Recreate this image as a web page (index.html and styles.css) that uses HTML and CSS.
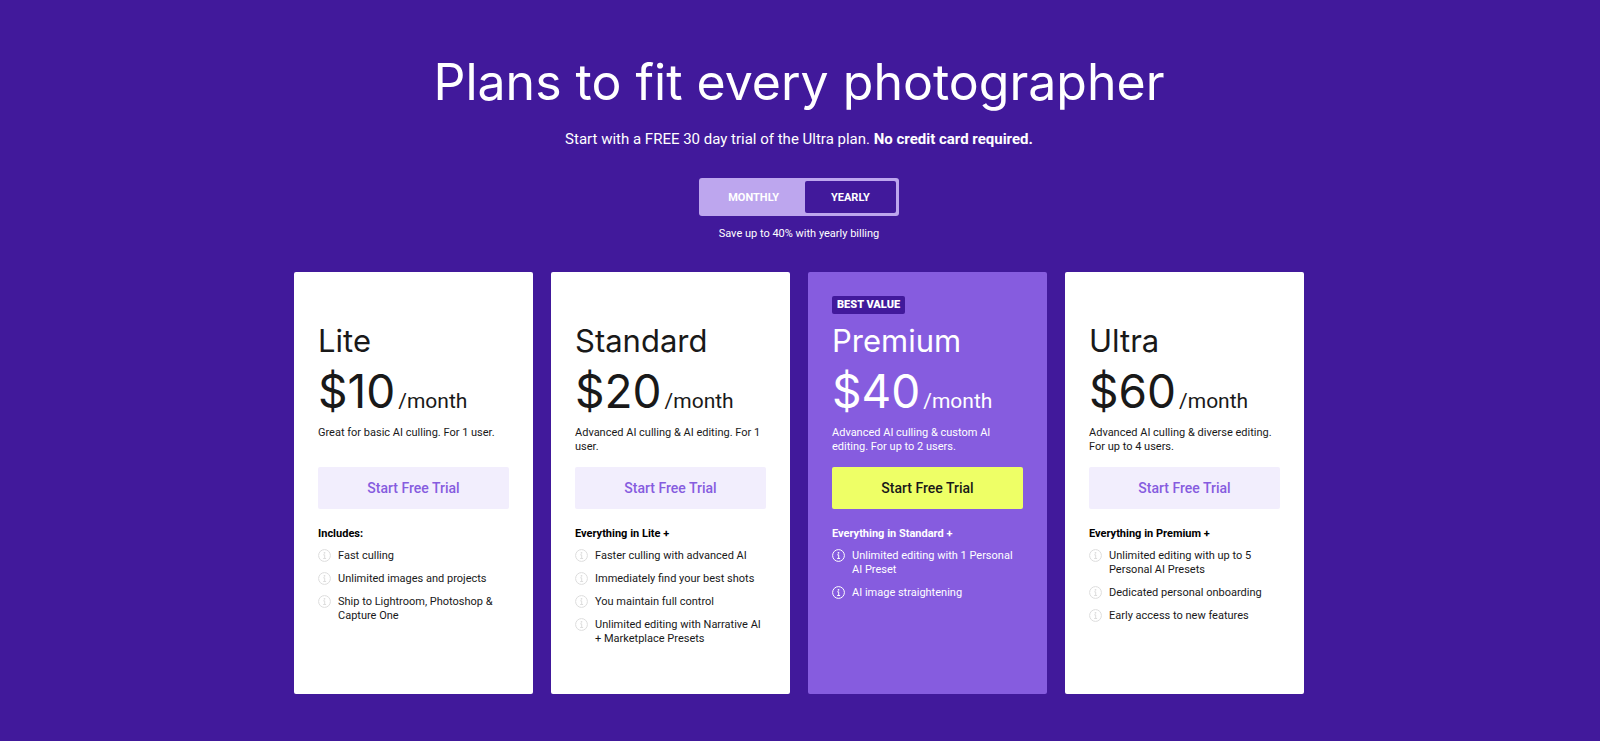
FILE: index.html
```html
<!DOCTYPE html>
<html lang="en">
<head>
    <meta charset="UTF-8">
    <meta name="viewport" content="width=device-width, initial-scale=1.0">
    <title>Plans to fit every photographer</title>
    <link rel="stylesheet" href="styles.css">
</head>
<body>
    <svg class="sprite" aria-hidden="true">
        <symbol id="info" viewBox="0 0 13 13">
            <circle cx="6.5" cy="6.5" r="5.9" fill="none" stroke="currentColor"/>
            <circle cx="6.5" cy="3.8" r="0.9" fill="currentColor"/>
            <path d="M5.2 5.8H6.7V9.5M5.2 9.5H8.1" fill="none" stroke="currentColor"/>
        </symbol>
    </svg>

    <header class="header">
        <h1>Plans to fit every photographer</h1>
        <p class="intro">Start with a FREE 30 day trial of the Ultra plan. <strong>No credit card required.</strong></p>
        <div class="billing">
            <button type="button" class="billing-btn">MONTHLY</button>
            <button type="button" class="billing-btn active">YEARLY</button>
        </div>
        <p class="save">Save up to 40% with yearly billing</p>
    </header>

    <main class="plans">
        <section class="plan">
            <div class="badge-row"></div>
            <h2>Lite</h2>
            <p class="price">$10<span class="per">/month</span></p>
            <p class="description">Great for basic AI culling. For 1 user.</p>
            <button type="button" class="trial-btn">Start Free Trial</button>
            <h3>Includes:</h3>
            <ul class="features">
                <li><svg class="icon"><use href="#info"/></svg><span>Fast culling</span></li>
                <li><svg class="icon"><use href="#info"/></svg><span>Unlimited images and projects</span></li>
                <li><svg class="icon"><use href="#info"/></svg><span>Ship to Lightroom, Photoshop &amp; Capture One</span></li>
            </ul>
        </section>

        <section class="plan">
            <div class="badge-row"></div>
            <h2>Standard</h2>
            <p class="price">$20<span class="per">/month</span></p>
            <p class="description">Advanced AI culling &amp; AI editing. For 1 user.</p>
            <button type="button" class="trial-btn">Start Free Trial</button>
            <h3>Everything in Lite +</h3>
            <ul class="features">
                <li><svg class="icon"><use href="#info"/></svg><span>Faster culling with advanced AI</span></li>
                <li><svg class="icon"><use href="#info"/></svg><span>Immediately find your best shots</span></li>
                <li><svg class="icon"><use href="#info"/></svg><span>You maintain full control</span></li>
                <li><svg class="icon"><use href="#info"/></svg><span>Unlimited editing with Narrative AI + Marketplace Presets</span></li>
            </ul>
        </section>

        <section class="plan premium">
            <div class="badge-row"><span class="badge">BEST VALUE</span></div>
            <h2>Premium</h2>
            <p class="price">$40<span class="per">/month</span></p>
            <p class="description">Advanced AI culling &amp; custom AI editing. For up to 2 users.</p>
            <button type="button" class="trial-btn">Start Free Trial</button>
            <h3>Everything in Standard +</h3>
            <ul class="features">
                <li><svg class="icon"><use href="#info"/></svg><span>Unlimited editing with 1 Personal AI Preset</span></li>
                <li><svg class="icon"><use href="#info"/></svg><span>AI image straightening</span></li>
            </ul>
        </section>

        <section class="plan">
            <div class="badge-row"></div>
            <h2>Ultra</h2>
            <p class="price">$60<span class="per">/month</span></p>
            <p class="description">Advanced AI culling &amp; diverse editing. For up to 4 users.</p>
            <button type="button" class="trial-btn">Start Free Trial</button>
            <h3>Everything in Premium +</h3>
            <ul class="features">
                <li><svg class="icon"><use href="#info"/></svg><span>Unlimited editing with up to 5 Personal AI Presets</span></li>
                <li><svg class="icon"><use href="#info"/></svg><span>Dedicated personal onboarding</span></li>
                <li><svg class="icon"><use href="#info"/></svg><span>Early access to new features</span></li>
            </ul>
        </section>
    </main>
</body>
</html>
```
FILE: styles.css
```css
* {
    box-sizing: border-box;
}
body {
    margin: 0;
    padding: 52px 26px 47px 24px;
    background: #41199b;
    color: white;
    font-family: Roboto, Arial, sans-serif;
    font-size: 11px;
    line-height: 14px;
}
h1, h2, h3, p, ul {
    margin: 0;
    padding: 0;
}
button {
    border: none;
    font-family: inherit;
    cursor: pointer;
}
.sprite {
    display: none;
}
.header {
    display: flex;
    flex-direction: column;
    align-items: center;
    text-align: center;
}
h1 {
    font-family: Inter, Arial, sans-serif;
    font-size: 50px;
    font-weight: 400;
    line-height: 60px;
}
.intro {
    margin-top: 16px;
    font-size: 15px;
    line-height: 22px;
}
.billing {
    display: flex;
    height: 38px;
    margin-top: 28px;
    padding: 3px;
    border-radius: 3px;
    background: #bda6ee;
}
.billing-btn {
    padding: 0 26px;
    border-radius: 2px;
    background: none;
    color: white;
    font-size: 11px;
    font-weight: 700;
}
.billing-btn.active {
    background: #41199b;
}
.save {
    margin-top: 11px;
}
.plans {
    display: grid;
    grid-template-columns: repeat(4, 1fr);
    gap: 18px;
    max-width: 1010px;
    margin: 31px auto 0;
}
.plan {
    display: flex;
    flex-direction: column;
    min-height: 422px;
    padding: 24px;
    border-radius: 2px;
    background: white;
    color: #191919;
}
.badge-row {
    display: flex;
    height: 18px;
}
.badge {
    padding: 0 5px;
    border-radius: 2px;
    background: #41199b;
    font-size: 11px;
    font-weight: 900;
    line-height: 18px;
}
h2 {
    margin-top: 7px;
    font-family: Inter, Arial, sans-serif;
    font-size: 31px;
    font-weight: 400;
    line-height: 40px;
}
.price {
    margin-top: 3px;
    font-family: Inter, Arial, sans-serif;
    font-size: 46px;
    font-weight: 400;
    line-height: 54px;
}
.per {
    margin-left: 3px;
    font-family: Roboto, Arial, sans-serif;
    font-size: 21px;
    line-height: 20px;
}
.description {
    min-height: 28px;
    margin-top: 8px;
}
.trial-btn {
    height: 42px;
    margin-top: 13px;
    border-radius: 2px;
    background: #f2eefd;
    color: #865cdf;
    font-size: 14px;
    font-weight: 500;
}
h3 {
    margin-top: 18px;
    color: black;
    font-size: 11px;
    font-weight: 700;
}
.features {
    display: flex;
    flex-direction: column;
    gap: 9px;
    margin-top: 8px;
    list-style: none;
}
.features li {
    display: flex;
    gap: 7px;
}
.icon {
    flex: none;
    width: 13px;
    height: 13px;
    color: #dddddd;
}
.premium {
    background: #865cdf;
    color: white;
}
.premium h3, .premium .icon {
    color: white;
}
.premium .trial-btn {
    background: #eeff66;
    color: #191919;
}
@media (max-width: 900px) {
    .plans {
        grid-template-columns: repeat(2, 1fr);
    }
}
```
